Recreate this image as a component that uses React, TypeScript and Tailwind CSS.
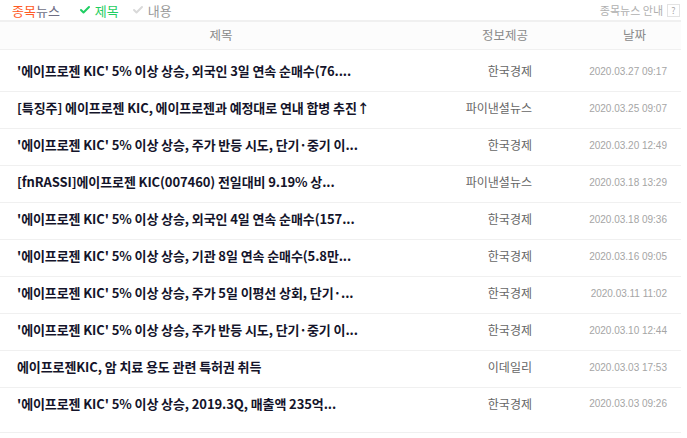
import { Check } from "lucide-react";

const NEWS = [
  { title: "'에이프로젠 KIC' 5% 이상 상승, 외국인 3일 연속 순매수(76....", source: "한국경제", date: "2020.03.27 09:17" },
  { title: "[특징주] 에이프로젠 KIC, 에이프로젠과 예정대로 연내 합병 추진↑", source: "파이낸셜뉴스", date: "2020.03.25 09:07" },
  { title: "'에이프로젠 KIC' 5% 이상 상승, 주가 반등 시도, 단기·중기 이...", source: "한국경제", date: "2020.03.20 12:49" },
  { title: "[fnRASSI]에이프로젠 KIC(007460) 전일대비 9.19% 상...", source: "파이낸셜뉴스", date: "2020.03.18 13:29" },
  { title: "'에이프로젠 KIC' 5% 이상 상승, 외국인 4일 연속 순매수(157...", source: "한국경제", date: "2020.03.18 09:36" },
  { title: "'에이프로젠 KIC' 5% 이상 상승, 기관 8일 연속 순매수(5.8만...", source: "한국경제", date: "2020.03.16 09:05" },
  { title: "'에이프로젠 KIC' 5% 이상 상승, 주가 5일 이평선 상회, 단기·...", source: "한국경제", date: "2020.03.11 11:02" },
  { title: "'에이프로젠 KIC' 5% 이상 상승, 주가 반등 시도, 단기·중기 이...", source: "한국경제", date: "2020.03.10 12:44" },
  { title: "에이프로젠KIC, 암 치료 용도 관련 특허권 취득", source: "이데일리", date: "2020.03.03 17:53" },
  { title: "'에이프로젠 KIC' 5% 이상 상승, 2019.3Q, 매출액 235억...", source: "한국경제", date: "2020.03.03 09:26" },
];

export default function App() {
  return (
    <div className="w-[687px] h-[438px] overflow-hidden bg-white font-['Noto_Sans_CJK_KR',sans-serif]">
      <div className="flex h-[20px] items-center pl-[12px] pr-[7px] text-[13px] leading-none">
        <span className="text-[#ff5a24]">종목</span>
        <span className="text-[#6e6e84]">뉴스</span>
        <span className="ml-[19px] flex items-center text-[#1fce62]">
          <Check size={12} strokeWidth={4} className="mr-[4px]" />
          제목
        </span>
        <span className="ml-[13px] flex items-center text-[#999]">
          <Check size={12} strokeWidth={4} className="mr-[4px] text-[#d9d9d9]" />
          내용
        </span>
        <span className="ml-auto text-[11px] text-[#b0b0b0]">종목뉴스 안내</span>
        <span className="ml-[4px] flex h-[13px] w-[13px] items-center justify-center border border-[#e3e3e3] text-[9px] text-[#aaa]">
          ?
        </span>
      </div>

      <div className="w-[681px]">
        <div className="flex h-[30px] items-center border-t-2 border-b border-[#f0f0f0] bg-[#fcfcfc] text-[12.5px] text-[#8a8a8a]">
          <div className="w-[442px] text-center">제목</div>
          <div className="w-[86px] text-right">정보제공</div>
          <div className="flex-1 pl-[95px]">날짜</div>
        </div>

        {NEWS.map((n, i) => (
          <div
            key={i}
            className={
              "flex items-center border-b border-[#f0f0f0] " +
              (i === 0 ? "h-[42px] pt-[5px] pb-1" : i === NEWS.length - 1 ? "h-[45px] pb-[13px]" : "h-[37px] pb-1")
            }
          >
            <div className="w-[442px] truncate pl-[17px] text-[13px] font-bold tracking-[-0.1px] text-[#14142a]">
              {n.title}
            </div>
            <div className="w-[90px] text-right text-[12px] text-[#666]">{n.source}</div>
            <div className="flex-1 pr-[14px] text-right font-['Liberation_Sans',sans-serif] text-[10px] text-[#a5a5a5]">
              {n.date}
            </div>
          </div>
        ))}
      </div>
    </div>
  );
}
